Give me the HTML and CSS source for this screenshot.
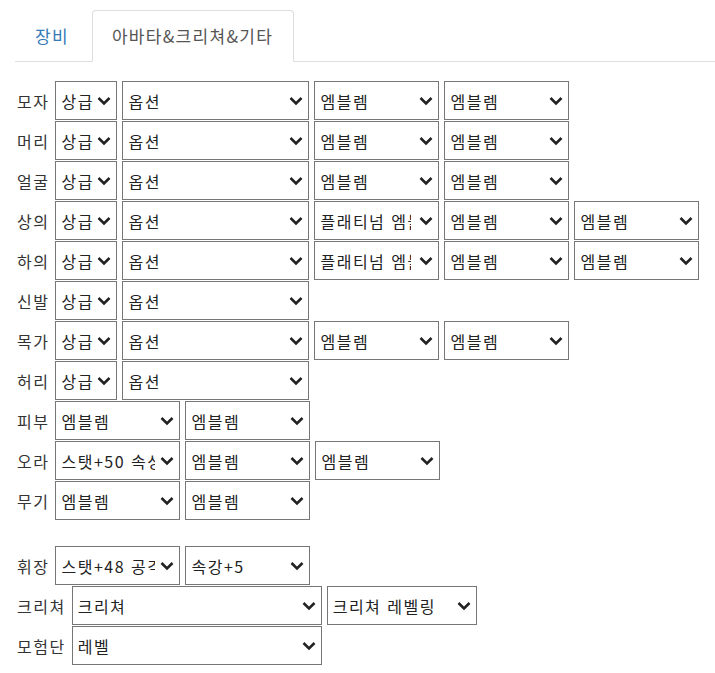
FILE: index.html
```html
<!DOCTYPE html>
<html lang="ko">
<head>
<meta charset="utf-8">
<title>아바타&amp;크리쳐&amp;기타</title>
<link rel="stylesheet" href="styles.css">
</head>
<body>
<div class="page">
  <ul class="tabs">
    <li class="tab"><a href="#">장비</a></li>
    <li class="tab active"><a href="#">아바타&amp;크리쳐&amp;기타</a></li>
  </ul>
  <div class="panel">
    <div class="row"><span class="lbl">모자</span>
      <select class="sel w-grade"><option>상급</option></select>
      <select class="sel w-opt"><option>옵션</option></select>
      <select class="sel w-emb"><option>엠블렘</option></select>
      <select class="sel w-emb"><option>엠블렘</option></select>
    </div>
    <div class="row"><span class="lbl">머리</span>
      <select class="sel w-grade"><option>상급</option></select>
      <select class="sel w-opt"><option>옵션</option></select>
      <select class="sel w-emb"><option>엠블렘</option></select>
      <select class="sel w-emb"><option>엠블렘</option></select>
    </div>
    <div class="row"><span class="lbl">얼굴</span>
      <select class="sel w-grade"><option>상급</option></select>
      <select class="sel w-opt"><option>옵션</option></select>
      <select class="sel w-emb"><option>엠블렘</option></select>
      <select class="sel w-emb"><option>엠블렘</option></select>
    </div>
    <div class="row"><span class="lbl">상의</span>
      <select class="sel w-grade"><option>상급</option></select>
      <select class="sel w-opt"><option>옵션</option></select>
      <select class="sel w-emb w-trunc"><option>플래티넘 엠블렘</option></select>
      <select class="sel w-emb"><option>엠블렘</option></select>
      <select class="sel w-emb"><option>엠블렘</option></select>
    </div>
    <div class="row"><span class="lbl">하의</span>
      <select class="sel w-grade"><option>상급</option></select>
      <select class="sel w-opt"><option>옵션</option></select>
      <select class="sel w-emb w-trunc"><option>플래티넘 엠블렘</option></select>
      <select class="sel w-emb"><option>엠블렘</option></select>
      <select class="sel w-emb"><option>엠블렘</option></select>
    </div>
    <div class="row"><span class="lbl">신발</span>
      <select class="sel w-grade"><option>상급</option></select>
      <select class="sel w-opt"><option>옵션</option></select>
    </div>
    <div class="row"><span class="lbl">목가</span>
      <select class="sel w-grade"><option>상급</option></select>
      <select class="sel w-opt"><option>옵션</option></select>
      <select class="sel w-emb"><option>엠블렘</option></select>
      <select class="sel w-emb"><option>엠블렘</option></select>
    </div>
    <div class="row"><span class="lbl">허리</span>
      <select class="sel w-grade"><option>상급</option></select>
      <select class="sel w-opt"><option>옵션</option></select>
    </div>
    <div class="row"><span class="lbl">피부</span>
      <select class="sel w-emb"><option>엠블렘</option></select>
      <select class="sel w-emb"><option>엠블렘</option></select>
    </div>
    <div class="row"><span class="lbl">오라</span>
      <select class="sel w-emb"><option>스탯+50 속성강화</option></select>
      <select class="sel w-emb"><option>엠블렘</option></select>
      <select class="sel w-emb"><option>엠블렘</option></select>
    </div>
    <div class="row"><span class="lbl">무기</span>
      <select class="sel w-emb"><option>엠블렘</option></select>
      <select class="sel w-emb"><option>엠블렘</option></select>
    </div>
    <div class="spacer"></div>
    <div class="row"><span class="lbl">휘장</span>
      <select class="sel w-emb"><option>스탯+48 공격력+30</option></select>
      <select class="sel w-emb"><option>속강+5</option></select>
    </div>
    <div class="row"><span class="lbl">크리쳐</span>
      <select class="sel w-wide"><option>크리쳐</option></select>
      <select class="sel w-lvl"><option>크리쳐 레벨링</option></select>
    </div>
    <div class="row"><span class="lbl">모험단</span>
      <select class="sel w-wide"><option>레벨</option></select>
    </div>
  </div>
</div>
</body>
</html>
```
FILE: styles.css
```css
html, body {
  margin: 0;
  padding: 0;
  background: #fff;
}
body {
  font-family: "Noto Sans CJK KR", "Noto Sans", sans-serif;
  font-size: 16px;
  color: #333;
}
.page {
  padding: 10px 0 0 15px;
}
.tabs {
  list-style: none;
  margin: 0;
  padding: 0;
  display: flex;
  border-bottom: 1px solid #ddd;
}
.tab {
  margin-right: 2px;
  margin-bottom: -1px;
}
.tab a {
  display: block;
  padding: 13px 20px 13px 19px;
  line-height: 24px;
  font-size: 17px;
  letter-spacing: 1.3px;
  text-decoration: none;
  color: #337ab7;
  border: 1px solid transparent;
  border-radius: 4px 4px 0 0;
}
.tab.active a {
  color: #555;
  background: #fff;
  border-color: #ddd;
  border-bottom-color: transparent;
}
.panel {
  padding-top: 19px;
}
.row {
  display: flex;
  align-items: center;
  gap: 5px;
  margin-bottom: 1px;
}
.lbl {
  line-height: 20px;
  color: #333;
  letter-spacing: 1.5px;
  margin-left: 2px;
  margin-right: 1px;
  white-space: nowrap;
}
.sel {
  -webkit-appearance: none;
  appearance: none;
  height: 39px;
  box-sizing: border-box;
  border: 1px solid #767676;
  border-radius: 0;
  background-color: #fff;
  background-image: url("data:image/svg+xml,%3Csvg xmlns='http://www.w3.org/2000/svg' width='14' height='10' viewBox='0 0 14 10'%3E%3Cpath d='M1.5 2 L7 7.5 L12.5 2' fill='none' stroke='%23222' stroke-width='2.6'/%3E%3C/svg%3E");
  background-repeat: no-repeat;
  background-position: right 5px center;
  background-size: 14px 10px;
  font-family: "Noto Sans CJK KR", "Noto Sans", sans-serif;
  font-size: 16px;
  letter-spacing: 1.5px;
  color: #222;
  padding: 0 24px 0 5px;
  margin: 0;
  flex: none;
}
.w-grade { width: 62px; padding-right: 20px; }
.w-opt { width: 187px; }
.w-emb { width: 125px; }
.w-trunc { padding-right: 27px; }
.w-wide { width: 250px; }
.w-lvl { width: 150px; }
.spacer {
  height: 25px;
}
```
